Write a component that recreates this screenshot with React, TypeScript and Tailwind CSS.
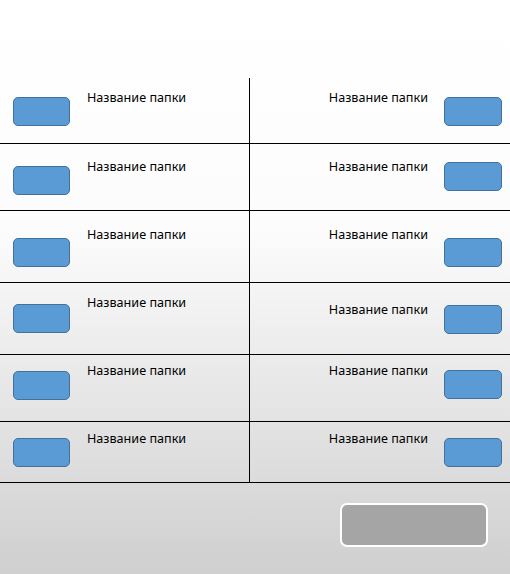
import React from "react";

type Row = {
  h: string;
  lt: string;
  lb: string;
  rt: string;
  rb: string;
};

const rows: Row[] = [
  { h: "h-[66px]", lt: "mt-[12px]", lb: "mt-[19px]", rt: "mt-[12px]", rb: "mt-[19px]" },
  { h: "h-[67px]", lt: "mt-[15px]", lb: "mt-[22px]", rt: "mt-[15px]", rb: "mt-[18px]" },
  { h: "h-[72px]", lt: "mt-[16px]", lb: "mt-[27px]", rt: "mt-[16px]", rb: "mt-[27px]" },
  { h: "h-[72px]", lt: "mt-[12px]", lb: "mt-[21px]", rt: "mt-[19px]", rb: "mt-[22px]" },
  { h: "h-[67px]", lt: "mt-[8px]", lb: "mt-[16px]", rt: "mt-[8px]", rb: "mt-[15px]" },
  { h: "h-[61px]", lt: "mt-[9px]", lb: "mt-[16px]", rt: "mt-[9px]", rb: "mt-[16px]" },
];

const Folder = ({ cls }: { cls: string }) => (
  <div
    className={`${cls} h-[29px] rounded-[5px] border border-[#41719c] bg-[#5b9bd5] shrink-0`}
  />
);

const Label = ({ cls }: { cls: string }) => (
  <div className={`${cls} text-[12.6px] leading-[16px] text-black whitespace-nowrap`}>
    Название папки
  </div>
);

export default function App() {
  return (
    <div
      className="w-[510px] h-[574px] flex flex-col bg-[linear-gradient(to_bottom,#ffffff_0%,#fcfcfc_40%,#cfcfcf_100%)]"
      style={{ fontFamily: '"Noto Sans", "Open Sans", sans-serif' }}
    >
      <div className="h-[78px] shrink-0" />
      {rows.map((r, i) => (
        <div key={i} className={`${r.h} shrink-0 flex border-b border-black`}>
          <div className="w-[250px] border-r border-black flex items-start pl-[13px]">
            <Folder cls={`${r.lb} w-[57px]`} />
            <Label cls={`${r.lt} ml-[17px]`} />
          </div>
          <div className="flex-1 flex items-start justify-end pr-[8px]">
            <Label cls={r.rt} />
            <Folder cls={`${r.rb} ml-[16px] w-[58px]`} />
          </div>
        </div>
      ))}
      <div className="flex-1 flex justify-end items-start pr-[22px] pt-[20px]">
        <div className="w-[148px] h-[44px] rounded-[7px] border-2 border-white bg-[#a5a5a5]" />
      </div>
    </div>
  );
}
